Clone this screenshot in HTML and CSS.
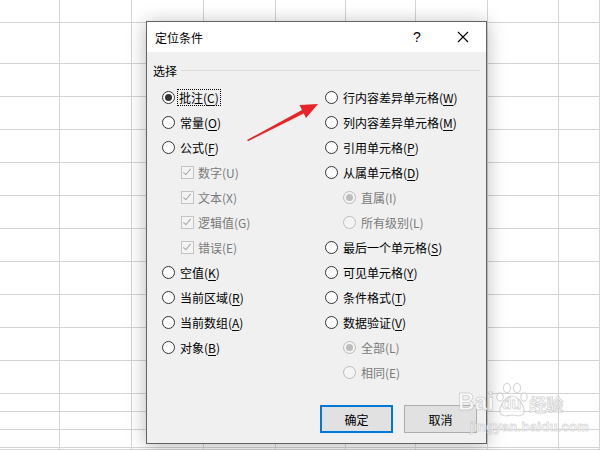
FILE: index.html
```html
<!DOCTYPE html>
<html lang="zh-CN">
<head>
    <meta charset="UTF-8">
    <title>定位条件</title>
    <link rel="stylesheet" href="styles.css">
</head>
<body>
    <div class="sheet">
        <div class="cols">
            <div></div><div></div><div></div><div></div><div></div><div></div><div></div><div></div><div></div>
        </div>
        <div class="rows">
            <div></div><div></div><div></div><div></div><div></div><div></div><div></div><div></div>
            <div></div><div></div><div></div><div></div><div></div><div></div><div></div><div></div>
        </div>
    </div>

    <div class="dialog">
        <div class="titlebar">
            <span class="title">定位条件</span>
            <span class="tb-btn help">?</span>
            <span class="tb-btn close">
                <svg width="12" height="12" viewBox="0 0 12 12"><path d="M1 1 L11 11 M11 1 L1 11" stroke="#000" stroke-width="1.1" fill="none"/></svg>
            </span>
        </div>

        <div class="body">
            <div class="group-head"><span>选择</span><div class="rule"></div></div>

            <div class="options">
                <div class="col">
                    <div class="opt"><span class="radio on"></span><span class="focus">批注(<u>C</u>)</span></div>
                    <div class="opt"><span class="radio"></span>常量(<u>O</u>)</div>
                    <div class="opt"><span class="radio"></span>公式(<u>F</u>)</div>
                    <div class="opt sub off"><span class="check"></span>数字(U)</div>
                    <div class="opt sub off"><span class="check"></span>文本(X)</div>
                    <div class="opt sub off"><span class="check"></span>逻辑值(G)</div>
                    <div class="opt sub off"><span class="check"></span>错误(E)</div>
                    <div class="opt"><span class="radio"></span>空值(<u>K</u>)</div>
                    <div class="opt"><span class="radio"></span>当前区域(<u>R</u>)</div>
                    <div class="opt"><span class="radio"></span>当前数组(<u>A</u>)</div>
                    <div class="opt"><span class="radio"></span>对象(<u>B</u>)</div>
                </div>
                <div class="col">
                    <div class="opt"><span class="radio"></span>行内容差异单元格(<u>W</u>)</div>
                    <div class="opt"><span class="radio"></span>列内容差异单元格(<u>M</u>)</div>
                    <div class="opt"><span class="radio"></span>引用单元格(<u>P</u>)</div>
                    <div class="opt"><span class="radio"></span>从属单元格(<u>D</u>)</div>
                    <div class="opt sub off"><span class="radio on"></span>直属(I)</div>
                    <div class="opt sub off"><span class="radio"></span>所有级别(L)</div>
                    <div class="opt"><span class="radio"></span>最后一个单元格(<u>S</u>)</div>
                    <div class="opt"><span class="radio"></span>可见单元格(<u>Y</u>)</div>
                    <div class="opt"><span class="radio"></span>条件格式(<u>T</u>)</div>
                    <div class="opt"><span class="radio"></span>数据验证(<u>V</u>)</div>
                    <div class="opt sub off"><span class="radio on"></span>全部(L)</div>
                    <div class="opt sub off"><span class="radio"></span>相同(E)</div>
                </div>
            </div>

            <div class="buttons">
                <button class="default">确定</button>
                <button>取消</button>
            </div>
        </div>
    </div>

    <svg class="arrow" width="600" height="450" viewBox="0 0 600 450">
        <polygon points="247,140 302,110 299.5,105 318,104 306,118 303.8,113.6 248,141.2" fill="#e8242b"/>
    </svg>

    <div class="watermark">
        <div class="wm-top">
            <span class="wm-word">Bai</span>
            <svg class="paw" width="32" height="36" viewBox="0 0 32 36">
                <g fill="rgba(255,255,255,0.75)" stroke="rgba(170,170,170,0.45)" stroke-width="1.2">
                    <ellipse cx="4" cy="15" rx="3.2" ry="4.2"/>
                    <ellipse cx="11" cy="6" rx="3.6" ry="4.6"/>
                    <ellipse cx="21" cy="6" rx="3.6" ry="4.6"/>
                    <ellipse cx="28" cy="15" rx="3.2" ry="4.2"/>
                    <path d="M16 14 C10 14 3 25 4 30 C5 35 11 34 16 33 C21 34 27 35 28 30 C29 25 22 14 16 14 Z"/>
                </g>
            </svg>
            <span class="wm-du">du</span>
            <span class="wm-cn">经验</span>
        </div>
        <div class="wm-url">jingyan.baidu.com</div>
    </div>
</body>
</html>
```

FILE: styles.css
```css
body {
    margin: 0;
    width: 600px;
    height: 450px;
    overflow: hidden;
    background: #fff;
    font-family: "Noto Sans CJK SC", "Liberation Sans", sans-serif;
    font-size: 12px;
    color: #000;
}

/* spreadsheet grid behind the dialog */
.sheet {
    display: grid;
    width: 600px;
    height: 450px;
}

.cols, .rows {
    grid-area: 1 / 1;
    display: grid;
}

.cols {
    grid-template-columns: 60px 72px 72px 72px 70px 70px 72px 71px 1fr;
}

.cols div {
    border-right: 1px solid #d4d4d4;
}

.rows {
    grid-template-rows: 23px 41px repeat(10, 33px) 18px 18px 18px 1fr;
}

.rows div {
    border-bottom: 1px solid #d4d4d4;
}

.cols div, .rows div {
    box-sizing: border-box;
}

/* dialog */
.dialog {
    position: absolute;
    left: 146px;
    top: 21px;
    width: 341px;
    height: 423px;
    box-sizing: border-box;
    border: 1px solid #626262;
    background: #f0f0f0;
    box-shadow: 0 2px 18px rgba(0, 0, 0, 0.28);
    display: flex;
    flex-direction: column;
}

.titlebar {
    height: 30px;
    background: #fff;
    display: flex;
    align-items: center;
    padding-left: 8px;
}

.title {
    flex: 1;
}

.tb-btn {
    width: 46px;
    height: 30px;
    display: flex;
    align-items: center;
    justify-content: center;
}

.help {
    font-family: "Liberation Sans", sans-serif;
    font-size: 14px;
}

.body {
    flex: 1;
    display: flex;
    flex-direction: column;
}

.group-head {
    display: flex;
    align-items: center;
    height: 16px;
    margin-top: 10px;
    padding: 0 6px;
}

.group-head .rule {
    flex: 1;
    border-top: 1px solid #dcdcdc;
    margin-left: 4px;
}

.options {
    display: grid;
    grid-template-columns: 163px 1fr;
    padding-left: 15px;
    margin-top: 7px;
}

.opt {
    height: 25px;
    display: flex;
    align-items: center;
    white-space: nowrap;
}

.opt u {
    text-decoration-thickness: 1px;
    text-underline-offset: 2px;
}

.opt.sub {
    padding-left: 19px;
}

.col:last-child .opt.sub {
    padding-left: 18px;
}

.opt.off {
    color: #7a7a7a;
}

.radio {
    width: 13px;
    height: 13px;
    box-sizing: border-box;
    border: 1px solid #333;
    border-radius: 50%;
    background: #fff;
    margin-right: 5px;
    display: flex;
    align-items: center;
    justify-content: center;
    flex-shrink: 0;
}

.radio.on::after {
    content: "";
    width: 7px;
    height: 7px;
    border-radius: 50%;
    background: #333;
}

.off .radio {
    border-color: #bcbcbc;
    background: #f4f4f4;
}

.off .radio.on::after {
    background: #bcbcbc;
}

.check {
    width: 13px;
    height: 13px;
    box-sizing: border-box;
    border: 1px solid #c4c4c4;
    background: #f4f4f4;
    margin-right: 4px;
    position: relative;
    flex-shrink: 0;
}

.check::after {
    content: "";
    position: absolute;
    left: 3px;
    top: 0px;
    width: 3px;
    height: 7px;
    border: solid #a8a8a8;
    border-width: 0 1px 1px 0;
    transform: rotate(40deg);
}

.focus {
    border: 1px dotted #000;
    padding: 0 1px;
    margin-left: -3px;
    line-height: 15px;
}

.buttons {
    margin-top: auto;
    display: flex;
    justify-content: flex-end;
    gap: 11px;
    padding: 0 9px 10px 0;
}

button {
    width: 73px;
    height: 28px;
    box-sizing: border-box;
    border: 1px solid #adadad;
    background: #e1e1e1;
    font-family: inherit;
    font-size: 12px;
    color: #000;
    padding: 0;
}

button.default {
    border: 2px solid #0078d7;
}

/* overlays */
.arrow {
    position: absolute;
    left: 0;
    top: 0;
}

.watermark {
    position: absolute;
    left: 458px;
    top: 382px;
    font-family: "Liberation Sans", sans-serif;
    font-weight: bold;
}

.wm-top {
    display: flex;
    align-items: flex-end;
}

.wm-word, .wm-du, .wm-cn {
    color: rgba(255, 255, 255, 0.8);
    -webkit-text-stroke: 1px rgba(170, 170, 170, 0.45);
}

.wm-word {
    font-size: 23px;
    line-height: 26px;
    margin-right: 2px;
}

.paw {
    margin-bottom: -3px;
}

.wm-du {
    font-size: 16px;
    line-height: 18px;
    margin-left: -26px;
    margin-right: 8px;
    margin-bottom: 2px;
}

.wm-cn {
    font-family: "Noto Sans CJK SC", sans-serif;
    font-size: 17px;
    line-height: 22px;
}

.wm-url {
    margin-top: 4px;
    margin-left: 12px;
    font-size: 13px;
    color: rgba(255, 255, 255, 0.8);
    -webkit-text-stroke: 1px rgba(170, 170, 170, 0.4);
    letter-spacing: 0.3px;
}
```
